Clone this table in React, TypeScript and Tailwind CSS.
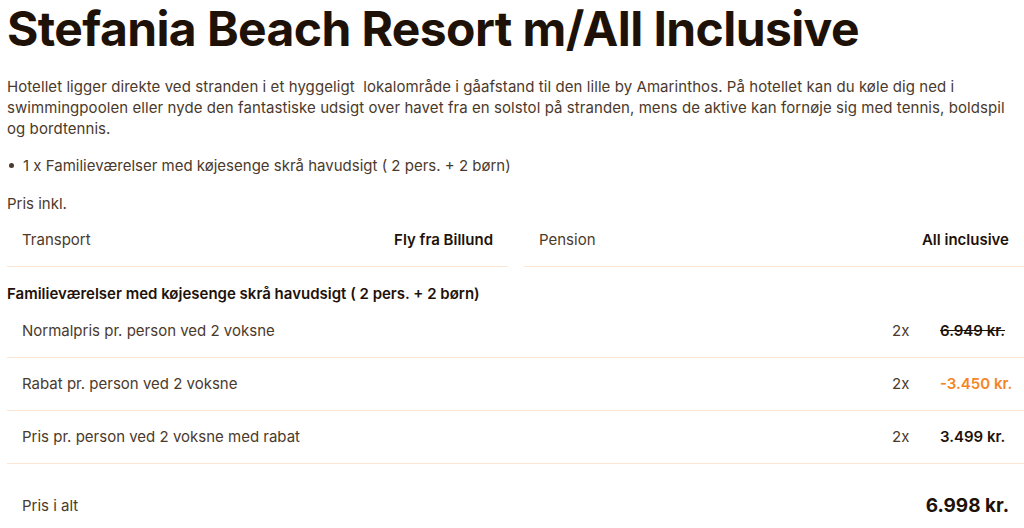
import React from "react";

const rows = [
  { label: "Normalpris pr. person ved 2 voksne", qty: "2x", price: "6.949 kr.", kind: "old" },
  { label: "Rabat pr. person ved 2 voksne", qty: "2x", price: "-3.450 kr.", kind: "discount" },
  { label: "Pris pr. person ved 2 voksne med rabat", qty: "2x", price: "3.499 kr.", kind: "normal" },
];

export default function App() {
  return (
    <div className="bg-white w-[1024px] h-[528px] overflow-hidden pl-[7px] text-[#4b3a2c] font-['Inter',sans-serif]">
      <h1 className="text-[48px] leading-[58px] font-bold text-[#1e1208] tracking-[-0.6px] whitespace-nowrap">
        Stefania Beach Resort m/All Inclusive
      </h1>

      <p className="mt-[18px] text-[15px] leading-[21px] pr-[10px] tracking-[0.07px]">
        Hotellet ligger direkte ved stranden i et hyggeligt&nbsp; lokalområde i gåafstand til den lille by Amarinthos. På hotellet kan du køle dig ned i swimmingpoolen eller nyde den fantastiske udsigt over havet fra en solstol på stranden, mens de aktive kan fornøje sig med tennis, boldspil og bordtennis.
      </p>

      <ul className="mt-[16px] text-[15px] leading-[21px]">
        <li className="flex items-center">
          <span className="w-[5px] h-[5px] rounded-full bg-[#4b3a2c] ml-[2px] mr-[9px]" />
          1 x Familieværelser med køjesenge skrå havudsigt ( 2 pers. + 2 børn)
        </li>
      </ul>

      <div className="mt-[17px] text-[15px] leading-[21px]">Pris inkl.</div>

      <div className="flex gap-[16px] text-[15px]">
        <div className="w-[501px] flex justify-between items-center h-[53px] px-[15px] border-b border-[#fde6d3]">
          <span>Transport</span>
          <span className="font-semibold text-[#1e1208]">Fly fra Billund</span>
        </div>
        <div className="flex-1 flex justify-between items-center h-[53px] px-[15px] border-b border-[#fde6d3]">
          <span>Pension</span>
          <span className="font-semibold text-[#1e1208]">All inclusive</span>
        </div>
      </div>

      <div className="mt-[16px] text-[15px] leading-[21px] font-semibold text-[#1e1208]">
        Familieværelser med køjesenge skrå havudsigt ( 2 pers. + 2 børn)
      </div>

      <div className="mt-[1px] text-[15px]">
        {rows.map((r) => (
          <div key={r.label} className="flex items-center h-[53px] pl-[15px] pr-[15px] border-b border-[#fde6d3]">
            <span className="flex-1">{r.label}</span>
            <span className="w-[48px]">{r.qty}</span>
            <span
              className={
                "w-[69px] whitespace-nowrap font-semibold " +
                (r.kind === "old"
                  ? "line-through text-[#1e1208]"
                  : r.kind === "discount"
                  ? "text-[#f5851f]"
                  : "text-[#1e1208]")
              }
            >
              {r.price}
            </span>
          </div>
        ))}
        <div className="flex items-center justify-between h-[84px] pl-[15px] pr-[15px]">
          <span>Pris i alt</span>
          <span className="text-[19px] font-bold text-[#1e1208]">6.998 kr.</span>
        </div>
      </div>
    </div>
  );
}
